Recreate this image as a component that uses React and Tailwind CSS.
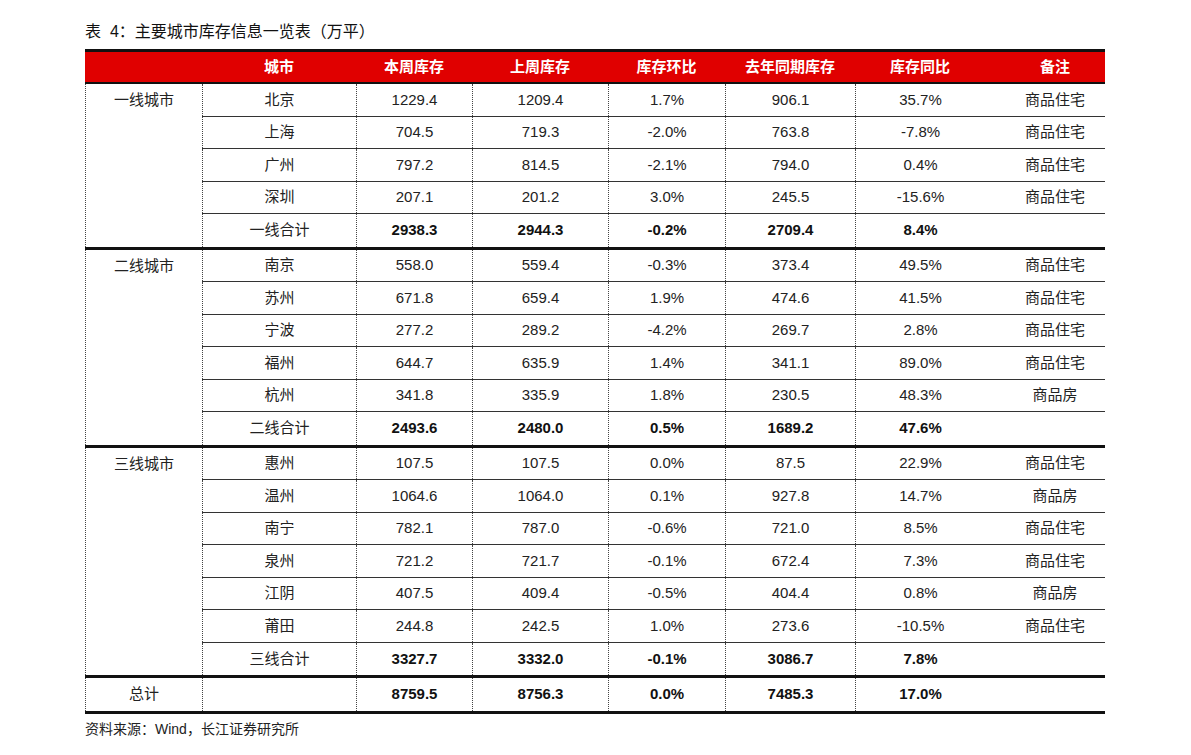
import React from "react";

const W = ["w-[154px]", "w-[116px]", "w-[136px]", "w-[117px]", "w-[130px]", "w-[130px]", "w-[120px]"];

const groups = [
  {
    name: "一线城市",
    rows: [
      ["北京", "1229.4", "1209.4", "1.7%", "906.1", "35.7%", "商品住宅"],
      ["上海", "704.5", "719.3", "-2.0%", "763.8", "-7.8%", "商品住宅"],
      ["广州", "797.2", "814.5", "-2.1%", "794.0", "0.4%", "商品住宅"],
      ["深圳", "207.1", "201.2", "3.0%", "245.5", "-15.6%", "商品住宅"],
    ],
    total: ["一线合计", "2938.3", "2944.3", "-0.2%", "2709.4", "8.4%", ""],
  },
  {
    name: "二线城市",
    rows: [
      ["南京", "558.0", "559.4", "-0.3%", "373.4", "49.5%", "商品住宅"],
      ["苏州", "671.8", "659.4", "1.9%", "474.6", "41.5%", "商品住宅"],
      ["宁波", "277.2", "289.2", "-4.2%", "269.7", "2.8%", "商品住宅"],
      ["福州", "644.7", "635.9", "1.4%", "341.1", "89.0%", "商品住宅"],
      ["杭州", "341.8", "335.9", "1.8%", "230.5", "48.3%", "商品房"],
    ],
    total: ["二线合计", "2493.6", "2480.0", "0.5%", "1689.2", "47.6%", ""],
  },
  {
    name: "三线城市",
    rows: [
      ["惠州", "107.5", "107.5", "0.0%", "87.5", "22.9%", "商品住宅"],
      ["温州", "1064.6", "1064.0", "0.1%", "927.8", "14.7%", "商品房"],
      ["南宁", "782.1", "787.0", "-0.6%", "721.0", "8.5%", "商品住宅"],
      ["泉州", "721.2", "721.7", "-0.1%", "672.4", "7.3%", "商品住宅"],
      ["江阴", "407.5", "409.4", "-0.5%", "404.4", "0.8%", "商品房"],
      ["莆田", "244.8", "242.5", "1.0%", "273.6", "-10.5%", "商品住宅"],
    ],
    total: ["三线合计", "3327.7", "3332.0", "-0.1%", "3086.7", "7.8%", ""],
  },
];

function Cells({ row, bold }) {
  return row.map((v, i) => (
    <div
      key={i}
      className={
        W[i] +
        " h-full flex items-center justify-center " +
        (i < 6 ? "border-l border-dotted border-[#444] " : "pl-[20px] ") +
        (bold && i > 0 ? "font-bold text-[#111]" : "")
      }
    >
      {v}
    </div>
  ));
}

export default function App() {
  return (
    <div
      className="w-[1191px] h-[755px] bg-white pl-[85px] text-[15px] text-[#222]"
      style={{ fontFamily: '"Liberation Sans", "Noto Sans CJK SC", sans-serif' }}
    >
      <div className="h-[49px] pt-[15px] flex items-center text-[16px] text-[#111]">表&nbsp;&nbsp;4：主要城市库存信息一览表（万平）</div>
      <div className="w-[1020px]">
        <div className="h-[35px] flex border-t-[3px] border-b-[2px] border-[#111] bg-[#e00000] text-white font-bold">
          <div className="w-[117px]" />
          {["城市", "本周库存", "上周库存", "库存环比", "去年同期库存", "库存同比", "备注"].map((h, i) => (
            <div key={i} className={W[i] + " flex items-center justify-center " + (i === 6 ? "pl-[20px]" : "")}>
              {h}
            </div>
          ))}
        </div>
        {groups.map((g) => (
          <div key={g.name} className="flex border-b-[3px] border-[#111]">
            <div className="w-[117px] border-l border-dotted border-[#444]">
              <div className="h-[32.5px] flex items-center justify-center">{g.name}</div>
            </div>
            <div className="flex flex-col">
              {g.rows.map((r, i) => (
                <div key={i} className="h-[32.5px] flex border-b border-[#333]">
                  <Cells row={r} />
                </div>
              ))}
              <div className="h-[32.5px] flex">
                <Cells row={g.total} bold />
              </div>
            </div>
          </div>
        ))}
        <div className="h-[36px] flex border-b-[3px] border-[#111]">
          <div className="w-[117px] border-l border-dotted border-[#444] flex items-center justify-center">总计</div>
          <Cells row={["", "8759.5", "8756.3", "0.0%", "7485.3", "17.0%", ""]} bold />
        </div>
      </div>
      <div className="mt-[5px] leading-[20px] text-[14px]">资料来源：Wind，长江证券研究所</div>
    </div>
  );
}
